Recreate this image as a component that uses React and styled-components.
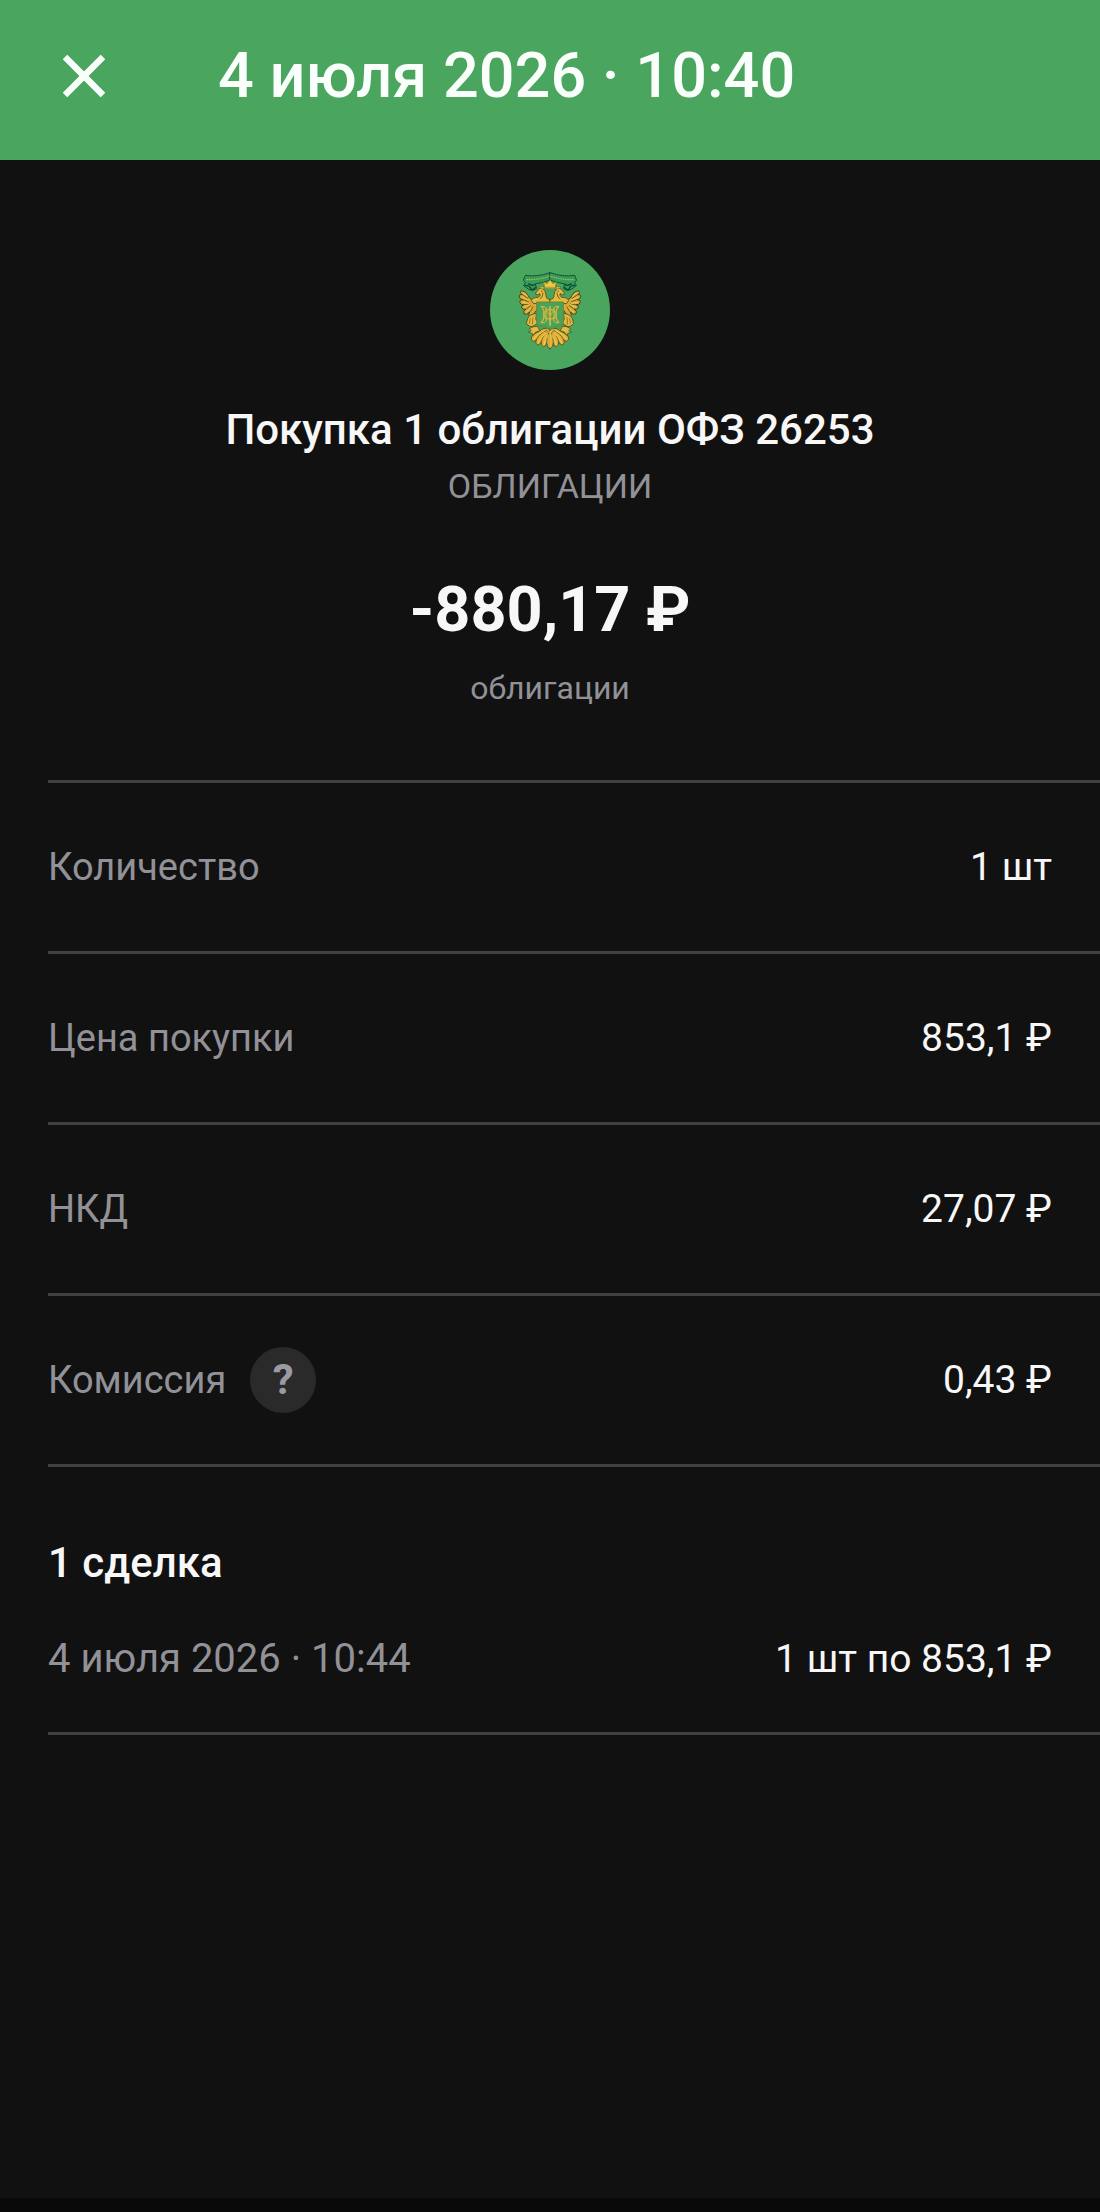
import styled, { createGlobalStyle } from "styled-components";

const details = [
  { name: "Количество", value: "1 шт" },
  { name: "Цена покупки", value: "853,1 ₽" },
  { name: "НКД", value: "27,07 ₽" },
  { name: "Комиссия", value: "0,43 ₽", hint: true },
];

export default function App() {
  return (
    <>
      <GlobalStyle />
      <Page>
        <Header>
          <CloseBtn type="button" aria-label="Закрыть">
            <CloseIcon />
          </CloseBtn>
          <h1>4 июля 2026 · 10:40</h1>
        </Header>

        <Summary>
          <Crest />
          <h2>Покупка 1 облигации ОФЗ 26253</h2>
          <p className="category">ОБЛИГАЦИИ</p>
          <p className="amount">-880,17 ₽</p>
          <p className="account">облигации</p>
        </Summary>

        <DetailList>
          {details.map((v) => (
            <li key={v.name}>
              <div className="nameBox">
                <span className="name">{v.name}</span>
                {v.hint && (
                  <HintBtn type="button" aria-label="О комиссии">
                    ?
                  </HintBtn>
                )}
              </div>
              <span className="value">{v.value}</span>
            </li>
          ))}
        </DetailList>

        <Deals>
          <h3>1 сделка</h3>
          <div className="deal">
            <time dateTime="2026-07-04T10:44">4 июля 2026 · 10:44</time>
            <span className="value">1 шт по 853,1 ₽</span>
          </div>
        </Deals>

        <BottomBar />
      </Page>
    </>
  );
}

function CloseIcon() {
  return (
    <svg width="42" height="42" viewBox="0 0 42 42" aria-hidden="true">
      <path d="M2 2l38 38M40 2L2 40" stroke="#fafffb" strokeWidth="6.5" />
    </svg>
  );
}

// left half of the eagle, mirrored for the right one
function CrestHalf() {
  return (
    <g strokeLinejoin="round" strokeLinecap="round">
      {/* ribbon */}
      <path
        d="M210 98Q170 112 136 106L130 121L136 127L131 137L146 148Q158 156 170 146L166 132Q190 128 210 120Z"
        fill="#389c59"
        stroke="#125437"
        strokeWidth="3"
      />
      <path
        d="M136 136q14 0 16 9t14-2M146 132l12 4 8-3"
        fill="none"
        stroke="#0d4a32"
        strokeWidth="4"
      />
      <path
        d="M141 119Q176 120 210 108"
        fill="none"
        stroke="#a4bd52"
        strokeWidth="3.5"
        strokeDasharray="2 5"
      />
      {/* wing */}
      <path
        d="M172 180Q150 182 145 168Q140 154 124 152Q117 158 127 164Q116 163 118 171Q120 179 129 179Q117 180 120 189Q124 196 132 194Q120 197 126 205Q131 210 138 207Q127 213 132 222Q140 226 149 216Q142 226 150 231Q160 228 164 218L172 208Z"
        fill="#d9a838"
        stroke="#3c4a1c"
        strokeWidth="3"
      />
      <path
        d="M129 165l14 10M130 179l15 6M133 194l15-2M140 206l12-9M151 214l8-13"
        fill="none"
        stroke="#4f521d"
        strokeWidth="2.5"
      />
      <path
        d="M129 157l14 12M126 171l18 9M128 187l18 3M133 202l16-8M138 217l14-12"
        fill="none"
        stroke="#f3cd52"
        strokeWidth="3"
      />
      {/* head and neck */}
      <path
        d="M210 186V178Q197 178 198 165Q197 150 187 146Q179 143 175 149L167 159Q166 166 172 164L180 161Q182 167 175 172Q158 172 154 181L160 190Z"
        fill="#e6b93f"
        stroke="#4b4c1b"
        strokeWidth="2.5"
      />
      <path
        d="M180 145l-2-6 7 3 5-5 2 9"
        fill="#edc444"
        stroke="#5f5a1d"
        strokeWidth="1.5"
      />
      <path
        d="M184 153l3 2M189 160l-3 11-6 5"
        fill="none"
        stroke="#5b4e18"
        strokeWidth="2.5"
      />
      {/* claw */}
      <path
        d="M168 220Q146 224 143 236L139 250L147 258Q156 264 165 255L174 250L168 239Z"
        fill="#e0b743"
        stroke="#4b4c1b"
        strokeWidth="2.5"
      />
      <path
        d="M151 236l-3 14M159 233l-2 20"
        fill="none"
        stroke="#705f20"
        strokeWidth="2"
      />
      <path
        d="M161 260l-13 6 6 6-9 4 12 4 1 8 9-12 12-3-5-12Z"
        fill="#e6ba3e"
        stroke="#4b4c1b"
        strokeWidth="2"
      />
      {/* tail */}
      <path
        d="M210 266Q188 262 181 272Q164 279 155 290Q150 300 160 304Q166 304 169 299Q164 310 172 315Q180 315 184 305Q183 318 191 320Q199 318 200 309Q201 322 210 327Z"
        fill="#dfb23a"
        stroke="#4b4c1b"
        strokeWidth="2.5"
      />
      <path
        d="M200 271q-20 7-31 28M203 275q-15 9-19 30M206 279q-7 12-6 30"
        fill="none"
        stroke="#615719"
        strokeWidth="2.5"
      />
      <path
        d="M193 272q-20 7-31 24M199 278q-17 14-24 31M204 285q-9 12-12 29"
        fill="none"
        stroke="#f4cf52"
        strokeWidth="3"
      />
      {/* shield */}
      <path
        d="M211 186H170V245Q170 258 184 259Q199 260 211 271Z"
        fill="#45a45d"
      />
      <path
        d="M210 186H170V245Q170 258 184 259Q199 260 210 271"
        fill="none"
        stroke="#77822b"
        strokeWidth="3"
      />
      {/* shield ornament */}
      <path
        d="M184 201q8 4 8 22t-8 24M184 200h9M184 248h9M198 203v41"
        fill="none"
        stroke="#d6b43b"
        strokeWidth="4"
      />
    </g>
  );
}

function Crest() {
  return (
    <svg width="120" height="120" viewBox="30 30 360 360" aria-hidden="true">
      <circle cx="210" cy="210" r="180" fill="#4aa55f" />
      <CrestHalf />
      <g transform="translate(420 0) scale(-1 1)">
        <CrestHalf />
      </g>
      <path d="M210 199v58" stroke="#dfba3d" strokeWidth="5" />
      <ellipse
        cx="210"
        cy="223"
        rx="19"
        ry="14"
        fill="none"
        stroke="#d9b53b"
        strokeWidth="4"
      />
      <path d="M196 202l14 30 14-30" fill="none" stroke="#cbab37" strokeWidth="3" />
      <path d="M197 151h26l-3 14q-10 9-20 0Z" fill="#4aa55f" />
      <path
        d="M196 146l-6-21 11 6 9-12 9 12 11-6-6 21Z"
        fill="#edc944"
        stroke="#7b7023"
        strokeWidth="2"
      />
      <path d="M198 142h24" stroke="#a98c2a" strokeWidth="2.5" />
      <path d="M210 274v49" stroke="#f3cc4a" strokeWidth="4" />
    </svg>
  );
}

const GlobalStyle = createGlobalStyle`
  * {
    box-sizing: border-box;
    margin: 0;
    padding: 0;
  }

  body {
    background: #111;
    color: #f7f7f7;
    font-family: Roboto, "Noto Sans", sans-serif;
  }

  button {
    border: none;
    background: none;
    font-family: inherit;
    cursor: pointer;
  }
`;

const Page = styled.main`
  display: flex;
  flex-direction: column;
  min-height: 100vh;
`;

const Header = styled.header`
  display: flex;
  align-items: center;
  gap: 92px;
  height: 160px;
  padding: 0 40px 8px 42px;
  background: #4aa55f;

  h1 {
    color: #fafffb;
    font-size: 63px;
    font-weight: 500;
    line-height: 72px;
  }
`;

const CloseBtn = styled.button`
  display: flex;
  align-items: center;
  justify-content: center;
  width: 84px;
  height: 84px;
`;

const Summary = styled.section`
  display: flex;
  flex-direction: column;
  align-items: center;
  padding: 90px 48px 68px;
  text-align: center;

  h2 {
    margin-top: 32px;
    font-size: 42px;
    font-weight: 500;
    line-height: 56px;
  }

  .category {
    color: #919197;
    font-size: 34px;
    line-height: 56px;
  }

  .amount {
    margin-top: 60px;
    font-size: 63px;
    font-weight: 700;
    line-height: 72px;
  }

  .account {
    margin-top: 18px;
    color: #919197;
    font-size: 32px;
    line-height: 48px;
  }
`;

const DetailList = styled.ul`
  margin-left: 48px;
  list-style: none;

  li {
    display: flex;
    align-items: center;
    justify-content: space-between;
    height: 171px;
    padding-right: 48px;
    border-top: 3px solid #414141;
  }

  .nameBox {
    display: flex;
    align-items: center;
    gap: 24px;
  }

  .name {
    color: #919197;
    font-size: 38px;
  }

  .value {
    font-size: 39px;
  }
`;

const HintBtn = styled.button`
  width: 66px;
  height: 66px;
  border-radius: 50%;
  background: #2a2a2a;
  color: #9a9aa3;
  font-size: 42px;
  font-weight: 700;
  line-height: 66px;
`;

const Deals = styled.section`
  margin-left: 48px;
  padding: 68px 0 45px;
  border-top: 3px solid #414141;
  border-bottom: 3px solid #414141;

  h3 {
    font-size: 42px;
    font-weight: 500;
    line-height: 56px;
  }

  .deal {
    display: flex;
    justify-content: space-between;
    margin-top: 40px;
    padding-right: 48px;
    line-height: 56px;
  }

  time {
    color: #919197;
    font-size: 40px;
  }

  .value {
    font-size: 39px;
  }
`;

const BottomBar = styled.div`
  height: 14px;
  margin-top: auto;
  background: #090909;
`;
